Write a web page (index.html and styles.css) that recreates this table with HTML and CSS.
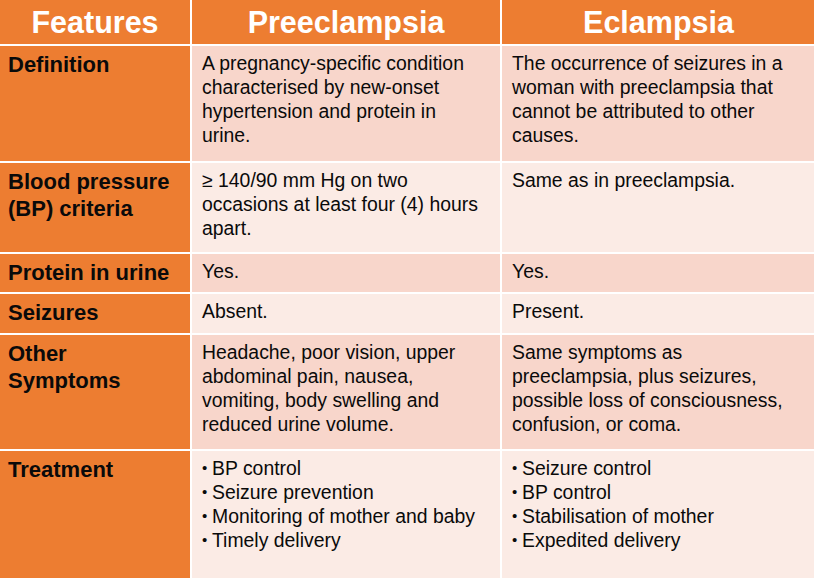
FILE: index.html
```html
<!DOCTYPE html>
<html>
<head>
<meta charset="utf-8">
<link rel="stylesheet" href="styles.css">
</head>
<body>
<div class="table">
  <div class="head">Features</div>
  <div class="head">Preeclampsia</div>
  <div class="head">Eclampsia</div>

  <div class="label">Definition</div>
  <div class="cell odd">A pregnancy-specific condition<br>characterised by new-onset<br>hypertension and protein in<br>urine.</div>
  <div class="cell odd">The occurrence of seizures in a<br>woman with preeclampsia that<br>cannot be attributed to other<br>causes.</div>

  <div class="label">Blood pressure<br>(BP) criteria</div>
  <div class="cell even">≥ 140/90 mm Hg on two<br>occasions at least four (4) hours<br>apart.</div>
  <div class="cell even">Same as in preeclampsia.</div>

  <div class="label">Protein in urine</div>
  <div class="cell odd">Yes.</div>
  <div class="cell odd">Yes.</div>

  <div class="label">Seizures</div>
  <div class="cell even">Absent.</div>
  <div class="cell even">Present.</div>

  <div class="label">Other<br>Symptoms</div>
  <div class="cell odd">Headache, poor vision, upper<br>abdominal pain, nausea,<br>vomiting, body swelling and<br>reduced urine volume.</div>
  <div class="cell odd">Same symptoms as<br>preeclampsia, plus seizures,<br>possible loss of consciousness,<br>confusion, or coma.</div>

  <div class="label">Treatment</div>
  <div class="cell even">
    <ul class="list">
      <li>BP control</li>
      <li>Seizure prevention</li>
      <li>Monitoring of mother and baby</li>
      <li>Timely delivery</li>
    </ul>
  </div>
  <div class="cell even">
    <ul class="list">
      <li>Seizure control</li>
      <li>BP control</li>
      <li>Stabilisation of mother</li>
      <li>Expedited delivery</li>
    </ul>
  </div>
</div>
</body>
</html>
```
FILE: styles.css
```css
html, body {
  margin: 0;
  padding: 0;
  background: #ffffff;
}
body {
  width: 814px;
  height: 578px;
  overflow: hidden;
  font-family: "Liberation Sans", Arial, sans-serif;
}
.table {
  display: grid;
  grid-template-columns: 190px 308px 313px;
  grid-template-rows: 44px 115px 89px 38px 39px 114px 127px;
  gap: 2px;
  background: #ffffff;
  width: 813px;
}
.head {
  background: #ED7D31;
  color: #ffffff;
  font-weight: bold;
  font-size: 30.5px;
  display: flex;
  align-items: center;
  justify-content: center;
  padding-top: 1px;
}
.label {
  background: #ED7D31;
  color: #0a0a0a;
  font-weight: bold;
  font-size: 22px;
  line-height: 27px;
  padding: 5px 8px 0 8px;
}
.cell {
  color: #0a0a0a;
  font-size: 19.4px;
  line-height: 24px;
  padding: 5px 9px 0 10px;
}
.odd {
  background: #F8D6CB;
}
.even {
  background: #FBEBE5;
}
.list {
  list-style: none;
  margin: 0;
  padding: 0;
}
.list li {
  line-height: 24px;
  height: 24px;
}
.list li::before {
  content: "•";
  display: inline-block;
  width: 10px;
  font-size: 15px;
  line-height: 0;
  vertical-align: 2px;
}
```
